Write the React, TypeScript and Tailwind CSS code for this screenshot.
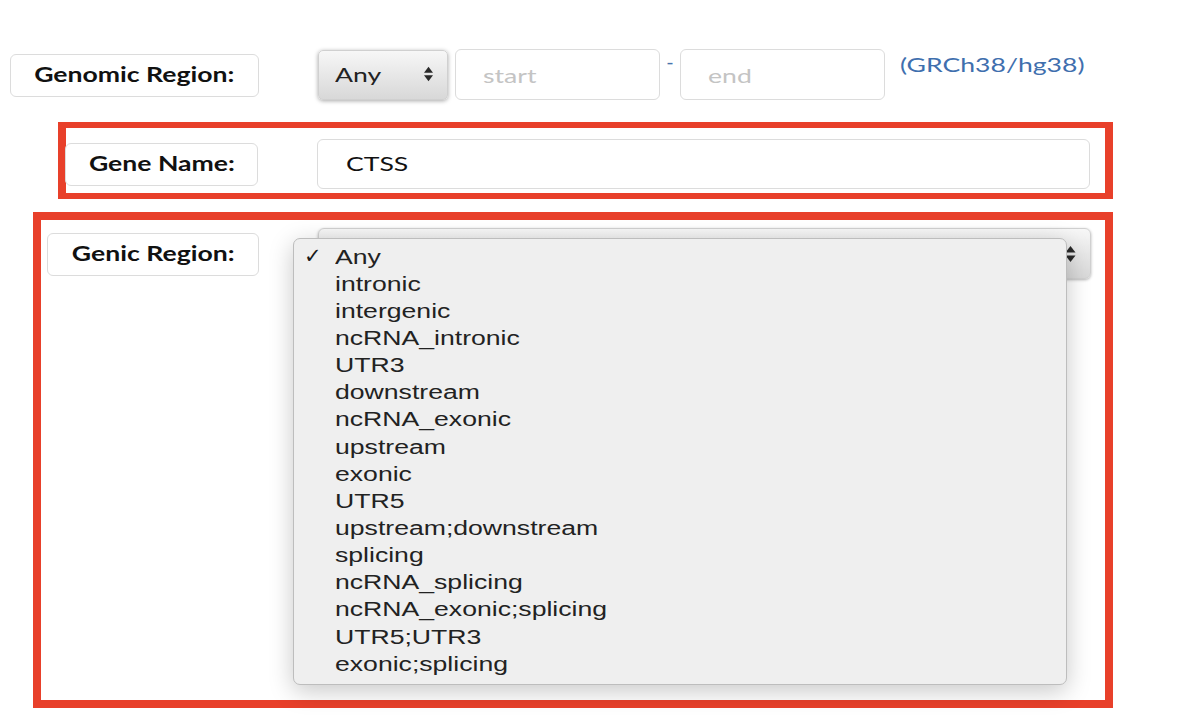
import React from 'react';

const options = [
  'Any',
  'intronic',
  'intergenic',
  'ncRNA_intronic',
  'UTR3',
  'downstream',
  'ncRNA_exonic',
  'upstream',
  'exonic',
  'UTR5',
  'upstream;downstream',
  'splicing',
  'ncRNA_splicing',
  'ncRNA_exonic;splicing',
  'UTR5;UTR3',
  'exonic;splicing',
];

// the screenshot is stretched sideways, so text gets widened to match
const Wide = ({ children, center = false }: { children: React.ReactNode; center?: boolean }) => (
  <span className={`inline-block whitespace-nowrap scale-x-[1.33] ${center ? 'origin-center' : 'origin-left'}`}>{children}</span>
);

const Arrows = ({ className = '' }: { className?: string }) => (
  <svg width="11" height="18" viewBox="0 0 11 18" className={className}>
    <path d="M5.5 1 L10.5 7.5 L0.5 7.5 Z" fill="#2a2a2a" />
    <path d="M5.5 17 L10.5 10.5 L0.5 10.5 Z" fill="#2a2a2a" />
  </svg>
);

const Label = ({ text, className = '' }: { text: string; className?: string }) => (
  <div
    className={`h-[43px] flex items-center justify-center pb-[3px] rounded-[6px] border border-[#dcdcdc] bg-white text-[20px] font-bold text-[#111] ${className}`}
  >
    <Wide center>{text}</Wide>
  </div>
);

const App = () => {
  return (
    <div className="w-[1189px] h-[722px] bg-white overflow-hidden relative" style={{ fontFamily: 'Lato, "Open Sans", sans-serif' }}>
      {/* genomic region row */}
      <div className="flex items-start pl-[10px] pt-[49px]">
        <Label text="Genomic Region:" className="w-[249px] mt-[5px]" />
        <div className="ml-[59px] mt-[1px] w-[130px] h-[50px] rounded-[5px] border border-[#d0d0d0] bg-gradient-to-b from-[#f7f7f7] to-[#d8d8d8] shadow-[0_1px_4px_rgba(0,0,0,0.35)] flex items-center justify-between pl-[16px] pr-[13px] pb-[2px] text-[20px] text-[#222]">
          <Wide>Any</Wide>
          <Arrows className="scale-90" />
        </div>
        <div className="ml-[7px] w-[205px] h-[51px] rounded-[6px] border border-[#dcdcdc] flex items-center pl-[27px] text-[20px] text-[#c4c4c4]">
          <Wide>start</Wide>
        </div>
        <div className="w-[20px] text-center text-[20px] leading-none text-[#4a74ae] mt-[2px]">-</div>
        <div className="w-[205px] h-[51px] rounded-[6px] border border-[#dcdcdc] flex items-center pl-[27px] text-[20px] text-[#c4c4c4]">
          <Wide>end</Wide>
        </div>
        <div className="ml-[15px] text-[20px] text-[#3f6fae]">
          <Wide>(GRCh38/hg38)</Wide>
        </div>
      </div>

      {/* gene name */}
      <div className="ml-[58px] mt-[22px] w-[1055px] h-[77px] border-x-[8px] border-y-[6px] border-[#e8402a] flex items-start pt-[11px]">
        <Label text="Gene Name:" className="w-[193px] mt-[4px] -ml-[1px]" />
        <div className="ml-[59px] w-[773px] h-[50px] rounded-[6px] border border-[#dcdcdc] flex items-center pl-[28px] pb-[2px] text-[20px] text-[#111]">
          <Wide>CTSS</Wide>
        </div>
      </div>

      {/* genic region */}
      <div className="ml-[33px] mt-[13px] w-[1080px] h-[496px] border-[8px] border-[#e8402a] relative flex items-start">
        <Label text="Genic Region:" className="w-[212px] ml-[6px] mt-[13px]" />
        <div className="ml-[59px] mt-[8px] w-[773px] h-[51px] rounded-[6px] border border-[#d0d0d0] bg-gradient-to-b from-[#f7f7f7] to-[#d8d8d8] shadow-[0_1px_3px_rgba(0,0,0,0.3)] flex items-center justify-end pr-[14px]">
          <Arrows />
        </div>
        {/* open dropdown list */}
        <div
          className="absolute left-[252px] top-[18px] w-[774px] h-[447px] rounded-[7px] border border-[#bdbdbd] bg-[#efefef] shadow-[0_6px_24px_rgba(0,0,0,0.22)] pt-[4px]"
          style={{ fontFamily: '"Liberation Sans", Arial, sans-serif' }}
        >
          {options.map((o, i) => (
            <div key={o} className="h-[27.15px] flex items-center text-[20px] text-[#222] leading-none">
              <span className="w-[41px] pl-[10px] text-[21px] font-bold text-[#1a1a1a]" style={{ fontFamily: '"DejaVu Sans", sans-serif' }}>
                {i === 0 ? '✓' : ''}
              </span>
              <Wide>{o}</Wide>
            </div>
          ))}
        </div>
      </div>
    </div>
  );
};

export default App;
